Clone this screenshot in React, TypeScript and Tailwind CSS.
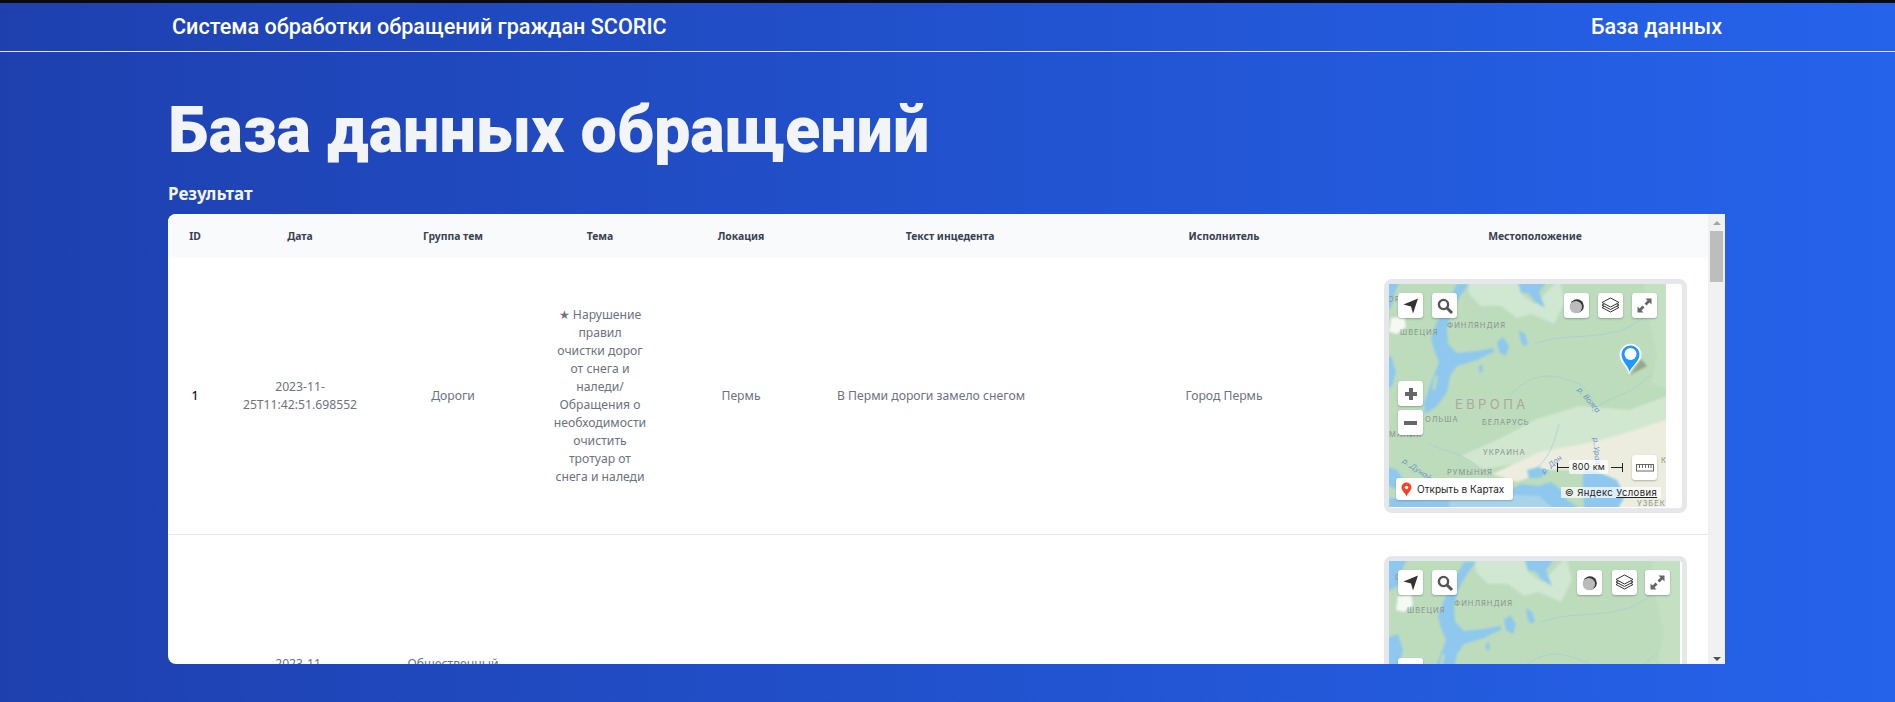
const rows = [
  {
    id: 1,
    date: "2023-11-25T11:42:51.698552",
    group: "Дороги",
    topic: "★ Нарушение правил очистки дорог от снега и наледи/ Обращения о необходимости очистить тротуар от снега и наледи",
    place: "Пермь",
    text: "В Перми дороги замело снегом",
    owner: "Город Пермь",
  },
  {
    id: 2,
    date: "2023-11-25T11:47:10.214087",
    group: "Общественный транспорт",
    topic: "",
    place: "",
    text: "",
    owner: "",
  },
];

const MapWorld = ({ dx, dy }: { dx: number; dy: number }) => (
  <g transform={`translate(${dx} ${dy})`}>
    <g className="blur-[1px]">
      <rect x="-20" y="-10" width="340" height="260" fill="#bcdcbc" />
      {/* tundra and forest-steppe */}
      <path d="M78 -5 L128 -5 L132 10 L146 20 L170 -5 L176 18 L165 40 L142 30 L128 34 L112 22 L92 22 L80 10Z" fill="#d0e7d1" />
      <path d="M255 -5 L300 -5 L300 110 L262 100 L268 70 L258 30Z" fill="#c3e0c3" />
      <path d="M72 172 L110 155 L148 135 L190 122 L240 126 L300 104 L300 150 L240 152 L205 160 L150 168 L125 180 L95 185Z" fill="#d2e7d0" />
      <path d="M150 168 L205 158 L240 148 L300 128 L300 230 L225 230 L190 186 L160 186 L128 198 L103 190 L125 180Z" fill="#ecedde" />
      {/* norway coast, snow, north sea */}
      <path d="M-10 -5 L12 -5 L6 8 L2 24 L-10 30Z" fill="#8fc8ee" />
      <path d="M2 34 L15 32 L17 43 L8 50 L0 48Z" fill="#f4f9f4" />
      <path d="M-10 76 L2 72 L7 88 L3 102 L-10 112Z" fill="#8fc8ee" />
      {/* baltic */}
      <path d="M68 0 L80 0 L71 12 L62 28 L58 44 L59 60 L68 69 L88 67 L104 64 L106 67 L88 76 L68 82 L61 92 L58 108 L48 122 L36 130 L35 120 L40 104 L44 94 L50 78 L45 66 L42 54 L48 38 L58 18Z" fill="#8fc8ee" />
      <path d="M46 92 L49 92 L46 106 L43 106Z" fill="#bcdcbc" />
      {/* lakes and white sea */}
      <path d="M128 -5 L160 -5 L150 8 L156 24 L146 18 L140 10 L132 8Z" fill="#8fc8ee" />
      <path d="M108 58 L114 53 L120 62 L117 72 L110 68Z" fill="#8fc8ee" />
      <path d="M130 46 L136 50 L139 60 L134 62 L131 54Z" fill="#8fc8ee" />
      <path d="M90 82 L93 80 L94 88 L90 88Z" fill="#8fc8ee" />
      {/* black sea, azov, caspian, med */}
      <path d="M108 230 L118 208 L132 200 L150 202 L162 198 L172 206 L178 216 L190 224 L190 230Z" fill="#8fc8ee" />
      <path d="M138 186 L150 183 L160 188 L150 194 L140 194Z" fill="#8fc8ee" />
      <path d="M194 186 L205 186 L228 196 L236 212 L226 230 L196 230 L194 210Z" fill="#8fc8ee" />
      <path d="M-5 182 L8 186 L18 200 L10 206 L-5 200Z" fill="#8fc8ee" />
      <path d="M0 214 L110 218 L110 230 L0 230Z" fill="#8fc8ee" />
      <path d="M60 208 L150 212 L170 230 L60 230Z" fill="#a9d3ea" />
    </g>
    {/* rivers */}
    <g fill="none" stroke="#a3ced4" strokeWidth="0.7">
      <path d="M120 112 C150 80 175 95 190 100 C205 110 205 120 203 128 C215 112 240 115 262 90" />
      <path d="M145 60 C170 50 200 55 225 48 C240 46 250 35 262 30" />
      <path d="M205 160 C210 175 205 190 200 192" />
      <path d="M170 140 C165 160 160 175 145 186" />
      <path d="M40 160 C55 168 75 168 90 185" />
    </g>
    {/* labels */}
    <g fontFamily="Inter, 'Noto Sans', sans-serif" fill="#8b9390" fontSize="7.5" letterSpacing="1">
      <text x="58" y="44">ФИНЛЯНДИЯ</text>
      <text x="11" y="51">ШВЕЦИЯ</text>
      <text x="36" y="138">ОЛЬША</text>
      <text x="93" y="141">БЕЛАРУСЬ</text>
      <text x="94" y="171">УКРАИНА</text>
      <text x="58" y="191">РУМЫНИЯ</text>
      <text x="-1" y="18">ОР</text>
      <text x="0" y="153">МАНИЯ</text>
      <text x="248" y="222">УЗБЕКИ</text>
      <text x="272" y="179">К</text>
    </g>
    <text x="66" y="125" fontFamily="Inter, 'Noto Sans', sans-serif" fontSize="13" letterSpacing="3.4" fill="#b3a49d">
      ЕВРОПА
    </text>
    <g fontFamily="Inter, 'Noto Sans', sans-serif" fill="#6d93c9" fontSize="7.5" fontStyle="italic">
      <text transform="translate(188 106) rotate(50)">р. Волга</text>
      <text transform="translate(204 154) rotate(85)">р. Урал</text>
      <text transform="translate(13 178) rotate(35)">р. Дунай</text>
      <text transform="translate(155 190) rotate(-40)">р. Дон</text>
    </g>
  </g>
);

const Tool = ({ className, children }: { className: string; children: React.ReactNode }) => (
  <div className={`absolute flex h-[25px] w-[25px] items-center justify-center rounded-[3px] bg-white shadow-[0_1px_2px_rgba(0,0,0,0.25)] ${className}`}>
    {children}
  </div>
);

const Pin = () => (
  <svg className="absolute left-[228px] top-[56px]" width="40" height="40" viewBox="0 0 40 40">
    <path className="blur-[1px]" d="M13 35 L30 26 L24 19Z" fill="#6f6f5a" opacity="0.5" />
    <path d="M12 35 C11 28 5 24 3 18 A11 11 0 1 1 24 18 C21 24 14 28 12 35Z" fill="#fff" />
    <path d="M12.5 32 C12 27 6.5 23 5 17.5 A9 9 0 1 1 22 17.5 C20 23 14 27 12.5 32Z" fill="#1e98ff" />
    <circle cx="13.5" cy="14" r="6" fill="#fff" />
  </svg>
);

const YandexMap = ({ width, dx, dy, pin, bottom }: { width: string; dx: number; dy: number; pin: boolean; bottom: boolean }) => {
  const layersLeft = pin ? "left-[175px]" : "left-[188px]";
  const stackLeft = pin ? "left-[209px]" : "left-[223px]";
  const expandLeft = pin ? "left-[243px]" : "left-[256px]";

  return (
    <div className={`relative h-[223px] overflow-hidden ${width}`}>
      <svg className="absolute inset-0" width="100%" height="223">
        <MapWorld dx={dx} dy={dy} />
      </svg>

      <Tool className="left-[9px] top-[9px]">
        <svg width="18" height="18" viewBox="0 0 18 18">
          <path d="M1.5 7.5 L16 1.5 L11 16.5 L9 9.5Z" fill="#333" />
        </svg>
      </Tool>
      <Tool className="left-[43px] top-[9px]">
        <svg width="18" height="18" viewBox="0 0 18 18" fill="none" stroke="#555" strokeWidth="2.4">
          <circle cx="7.5" cy="7.5" r="4.6" />
          <path d="M11 11 L16 16" strokeWidth="3" />
        </svg>
      </Tool>
      <Tool className={`${layersLeft} top-[9px]`}>
        <svg width="16" height="16" viewBox="0 0 16 16">
          <circle cx="8" cy="8" r="6.8" fill="#333" />
          <circle cx="6.9" cy="9.1" r="6.2" fill="#bbb" />
        </svg>
      </Tool>
      <Tool className={`${stackLeft} top-[9px]`}>
        <svg width="19" height="17" viewBox="0 0 19 17" fill="#fff" stroke="#333" strokeWidth="1">
          <path d="M1 10.5 L9.5 15 L18 10.5 L9.5 6Z" />
          <path d="M1 8 L9.5 12.5 L18 8 L9.5 3.5Z" />
          <path d="M1 5.5 L9.5 10 L18 5.5 L9.5 1Z" />
        </svg>
      </Tool>
      <Tool className={`${expandLeft} top-[9px]`}>
        <svg width="15" height="15" viewBox="0 0 15 15" fill="#666">
          <path d="M8.5 0.5 H14.5 V6.5 L12.5 4.5 L9.5 7.5 L7.5 5.5 L10.5 2.5Z" />
          <path d="M6.5 14.5 H0.5 V8.5 L2.5 10.5 L5.5 7.5 L7.5 9.5 L4.5 12.5Z" />
        </svg>
      </Tool>
      <Tool className="left-[9px] top-[97px]">
        <svg width="14" height="14" viewBox="0 0 14 14" fill="#666">
          <path d="M5 1 H9 V5 H13 V9 H9 V13 H5 V9 H1 V5 H5Z" />
        </svg>
      </Tool>
      <Tool className="left-[9px] top-[126px]">
        <div className="h-[4px] w-[13px] bg-[#666]" />
      </Tool>

      {pin && <Pin />}

      {bottom && (
        <>
          <div className="absolute left-[168px] top-[179px] h-[9px] border-l border-[#222]" />
          <div className="absolute left-[168px] top-[183px] h-px w-[12px] bg-[#222]" />
          <div className="absolute left-[222px] top-[183px] h-px w-[12px] bg-[#222]" />
          <div className="absolute left-[233px] top-[179px] h-[9px] border-l border-[#222]" />
          <div className="absolute left-[180px] top-[176px] rounded-[2px] bg-white/70 px-[3px] font-['Inter',sans-serif] text-[9px] leading-[14px] tracking-[0.3px] text-[#222]">
            800 км
          </div>
          <Tool className="left-[243px] top-[171px]">
            <svg width="18" height="8" viewBox="0 0 18 8" fill="none" stroke="#666">
              <rect x="0.5" y="0.5" width="17" height="6.5" />
              <path d="M3.5 1 V4 M6.5 1 V4 M9.5 1 V4 M12.5 1 V4 M15 1 V4" />
            </svg>
          </Tool>
          <div className="absolute left-[172px] top-[203px] flex h-[11px] w-[100px] items-center whitespace-nowrap bg-white/70 font-['Inter',sans-serif] text-[9.5px] tracking-[0.4px] text-[#222]">
            <span className="pl-[4px]">© Яндекс&nbsp;<span className="underline">Условия</span></span>
          </div>
          <div className="absolute left-[7px] top-[194px] flex h-[22px] w-[117px] items-center gap-[5px] rounded-[3px] bg-white pl-[5px] font-['Inter',sans-serif] text-[10px] text-[#222] shadow-[0_1px_2px_rgba(0,0,0,0.2)]">
            <svg width="11" height="15" viewBox="0 0 11 15">
              <path d="M5.5 0.5 A5 5 0 0 1 10.5 5.5 C10.5 8.5 7 10.5 5.5 14.5 C4 10.5 0.5 8.5 0.5 5.5 A5 5 0 0 1 5.5 0.5Z" fill="#fc3f1d" />
              <circle cx="5.5" cy="5.5" r="1.8" fill="#fff" />
            </svg>
            Открыть в Картах
          </div>
        </>
      )}
    </div>
  );
};

export default function App() {
  return (
    <div className="h-[702px] overflow-hidden bg-linear-to-r/srgb from-[#1e40af] to-[#2563eb] font-['Roboto',sans-serif]">
      <div className="h-[3px] bg-[#0a0a0a]" />
      <header className="flex h-[49px] items-center justify-between border-b border-[#e5e7eb] pl-[172px] pr-[173px] text-[21.6px] font-medium text-white">
        <span>Система обработки обращений граждан SCORIC</span>
        <span>База данных</span>
      </header>

      <main className="ml-[168px] w-[1557px]">
        <h1 className="mt-[38px] text-[64.8px] font-black leading-[80px] text-[#f3f4f6]">База данных обращений</h1>
        <h2 className="mt-[12px] font-['Noto_Sans',sans-serif] text-[17px] font-bold leading-[24px] text-[#f3f4f6]">Результат</h2>

        <div className="mt-[8px] flex h-[450px] overflow-hidden rounded-l-lg bg-white font-['Noto_Sans',sans-serif]">
          <div className="flex-1 overflow-hidden">
            <table className="w-full table-fixed text-center text-[12.2px] leading-[18px] text-[#6b7280]">
              <colgroup>
                <col className="w-[54px]" />
                <col className="w-[156px]" />
                <col className="w-[150px]" />
                <col className="w-[144px]" />
                <col className="w-[138px]" />
                <col className="w-[280px]" />
                <col className="w-[268px]" />
                <col />
              </colgroup>
              <thead className="bg-[#f9fafb] text-[10.4px] font-semibold text-[#374151]">
                <tr className="h-[44px]">
                  <th>ID</th>
                  <th>Дата</th>
                  <th>Группа тем</th>
                  <th>Тема</th>
                  <th>Локация</th>
                  <th>Текст инцедента</th>
                  <th>Исполнитель</th>
                  <th className="pl-[4px]">Местоположение</th>
                </tr>
              </thead>
              <tbody>
                {rows.map((row) => (
                  <tr key={row.id} className="border-b border-[#e5e7eb]">
                    <td className="font-medium text-[#111827]">{row.id}</td>
                    <td className="px-[20px]">{row.date}</td>
                    <td className="px-[24px]">{row.group}</td>
                    <td className="px-[25.5px]">{row.topic}</td>
                    <td>{row.place}</td>
                    <td className="pr-[38px]">{row.text}</td>
                    <td>{row.owner}</td>
                    <td className="pb-[21px] pl-[26px] pr-[21px] pt-[21px]">
                      <div className="rounded-lg border-[5px] border-[#e5e7eb] bg-white pb-px">
                        {row.id === 1 ? (
                          <YandexMap width="w-[277px]" dx={0} dy={0} pin bottom />
                        ) : (
                          <YandexMap width="w-[291px]" dx={7} dy={1} pin={false} bottom={false} />
                        )}
                      </div>
                    </td>
                  </tr>
                ))}
              </tbody>
            </table>
          </div>

          {/* scrollbar */}
          <div className="relative w-[17px] bg-[#f1f1f1]">
            <div className="absolute left-[5px] top-[7px] h-0 w-0 border-x-4 border-b-[4px] border-x-transparent border-b-[#a3a3a3]" />
            <div className="absolute left-[2px] top-[17px] h-[51px] w-[13px] bg-[#bdbdbd]" />
            <div className="absolute bottom-[3px] left-[5px] h-0 w-0 border-x-4 border-t-[4px] border-x-transparent border-t-[#505050]" />
          </div>
        </div>
      </main>
    </div>
  );
}
